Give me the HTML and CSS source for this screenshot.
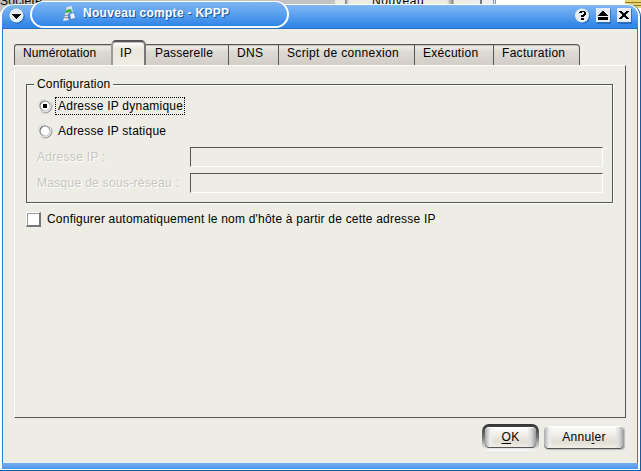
FILE: index.html
```html
<!DOCTYPE html>
<html lang="fr">
<head>
<meta charset="utf-8">
<title>Nouveau compte - KPPP</title>
<link rel="stylesheet" href="styles.css">
</head>
<body>
<div class="desktop">
  <div class="behind" aria-hidden="true"><span class="behind-left">Societe</span><span class="behind-button">Nouveau</span><span class="behind-edge"></span><span class="behind-icon"></span></div>
  <div class="window">
    <header class="titlebar">
      <svg class="menu" width="16" height="16" viewBox="0 0 16 16"><circle cx="8.5" cy="8.5" r="7.2" fill="#17589f" opacity=".6"/><circle cx="7.5" cy="7.5" r="7" fill="#e6edf5"/><path d="M3 6h9v1h-1v1h-1v1h-1v1h-1v1h-1v-1h-1v-1h-1v-1h-1v-1h-1z" fill="#000"/></svg>
      <svg class="tools" width="57" height="16" viewBox="0 0 57 16">
        <circle cx="8" cy="8.5" r="7" fill="#17589f" opacity=".6"/><circle cx="7" cy="7.5" r="7" fill="#e6edf5"/>
        <path d="M4 4h1v-1h5v1h1v3h-1v1h-1v1h-3v-2h2v-1h1v-2h-2v1h-3zM6 10h3v2h-3z" fill="#000"/>
        <path d="M22 1h14v15h-14zM43 1h14v15h-14z" fill="#17589f" opacity=".6"/>
        <path d="M21 0h14v14h-14zM42 0h14v14h-14z" fill="#e6edf5"/>
        <path d="M27 3h2v1h1v1h1v1h1v1h1v1h-10v-1h1v-1h1v-1h1v-1h1zM23 9h10v3h-10z" fill="#000"/>
        <path d="M44 3h3v1h1v1h2v-1h1v-1h3v1h-1v1h-1v1h-1v2h1v1h1v1h1v1h-3v-1h-1v-1h-2v1h-1v1h-3v-1h1v-1h1v-1h1v-2h-1v-1h-1v-1h-1z" fill="#000"/>
      </svg>
    </header>
    <div class="caption">
      <svg width="14" height="16" viewBox="0 0 14 16"><path d="M3 3l1-2 5-1v2l1 4-4 8-6 1 2-6z" fill="#dce2e6"/><path d="M3 4l5-1 1 3-7 1z" fill="#35b641"/><path d="M1 9h4v1H1zM1 11h4v1H0z" fill="#8d989f"/><path d="M5 8l3-2 4 1 1 6-3 2-5-2z" fill="#4b86d6"/><path d="M7 8l4-1 1 5-4 1z" fill="#e9f1fb"/></svg>
      <b>Nouveau compte - KPPP</b>
    </div>
    <main class="body">
      <nav class="tabs">
        <span class="tab first">Numérotation</span><span class="tab active">IP</span><span class="tab pass">Passerelle</span><span class="tab dns">DNS</span><span class="tab script">Script de connexion</span><span class="tab exec">Exécution</span><span class="tab fact">Facturation</span>
      </nav>
      <section class="page">
        <div class="group">
          <div class="legend"><i></i><span>Configuration</span><i></i></div>
          <div class="radio one"><svg width="16" height="16" viewBox="0 0 16 16"><use href="#ring"/><path d="M6 6h4v4H6z" fill="#000"/></svg><span class="focus">Adresse IP dynamique</span></div>
          <div class="radio two"><svg width="16" height="16" viewBox="0 0 16 16"><defs><linearGradient id="g" x2="1" y2="1"><stop stop-color="#bbb"/><stop offset=".4" stop-color="#fff"/><stop offset="1" stop-color="#555"/></linearGradient><linearGradient id="h" x2="1" y2="1"><stop stop-color="#555"/><stop offset=".7" stop-color="#bbb"/><stop offset="1" stop-color="#eee"/></linearGradient><g id="ring"><circle cx="8" cy="8" r="7" fill="#e6e5df" stroke="url(#g)"/><circle cx="8" cy="8" r="5" fill="#fff" stroke="url(#h)" stroke-width="1.2"/></g></defs><use href="#ring"/></svg><span>Adresse IP statique</span></div>
          <div class="field"><label class="addr">Adresse IP :</label><div class="input"></div></div>
          <div class="field"><label class="mask">Masque de sous-réseau :</label><div class="input"></div></div>
        </div>
        <div class="check"><span class="box"></span><span class="label">Configurer automatiquement le nom d'hôte à partir de cette adresse IP</span></div>
      </section>
      <footer class="buttons"><div class="default"><div class="button"><span><u>O</u>K</span></div></div><div class="button cancel"><span>Annu<u>l</u>er</span></div></footer>
    </main>
    <div class="bottom"></div>
  </div>
</div>
</body>
</html>
```
FILE: styles.css
```css
* { box-sizing: border-box; }
body { margin: 0; font: 12px/14px "Liberation Sans", Arial, sans-serif; letter-spacing: .3px; color: #000; white-space: nowrap; }
svg { display: block; flex: none; }
.desktop { width: 641px; height: 471px; position: relative; overflow: hidden; background: #fff; }
.behind { position: absolute; inset: 0 0 auto 0; height: 12px; background: #fff; }
.behind-left { position: absolute; left: 0; top: 0; width: 335px; height: 12px; background: #c3c3c3; line-height: 2px; }
.behind-button { position: absolute; left: 335px; top: 0; width: 133px; height: 4px; padding-left: 37px; line-height: 2px; letter-spacing: .6px; background: linear-gradient(90deg, #eeede5 10px, #888 10px 11px, #ddd 13px, #eeede5 16px 112px, #888 118px, #eeede5 119px); }
.behind-edge { position: absolute; left: 468px; top: 0; width: 29px; height: 4px; background: linear-gradient(90deg, #eee 12px, #777 12px 14px, #eee 14px 25px, #8796ad 25px 26px, #eee 26px 27px, #8796ad 27px 28px, #fff 28px); }
.behind-icon { position: absolute; right: 0; top: 0; width: 16px; height: 8px; background: repeating-linear-gradient(#e8d46c 0 2px, #8e7a29 2px 3px); }
.window { position: absolute; left: 0; top: 4px; width: 641px; height: 467px; display: flex; flex-direction: column; background: #fff; border-radius: 13px 13px 0 0; border-right: 1px solid #17589f; border-bottom: 1px solid #17589f; padding: 1px 2px 1px 2px; }
.titlebar { height: 24px; flex: none; display: flex; justify-content: space-between; padding: 3px 6px 0 7px; border-radius: 11px 11px 0 0; background: linear-gradient(#82b7f2, #5ba0ef 45%, #3186e6 90%); border-bottom: 1px solid #2870c3; }
.caption { position: absolute; left: 30px; top: -3px; width: 259px; height: 27px; display: flex; padding: 4px 0 0 31px; gap: 6px; border: 2px solid #fff; border-top-width: 1px; border-radius: 14px; background: linear-gradient(#7eb5f3, #5a9fee 50%, #2f86e8); color: #fff; line-height: 15px; letter-spacing: .3px; text-shadow: 1px 1px 0 #1c4f8f; }
.body { flex: 1; display: flex; flex-direction: column; padding: 11px 11px 0; background: #eeede5; border: solid #2c78c8; border-width: 0 1px; }
.tabs { display: flex; height: 25px; flex: none; align-items: flex-end; }
.tab { height: 21px; padding: 1px 0 0 8px; border-top: 1px solid #555; border-right: 1px solid #555; background: linear-gradient(#efeee7, #dddad3 35%, #d2cec7); box-shadow: inset 0 1px #c5c2bb; }
.first { width: 97px; border-left: 1px solid #555; border-radius: 3px 0 0; border-right: 0; letter-spacing: .1px; }
.active { width: 35px; height: 25px; padding: 4px 0 0 7px; border: 2px solid #555; border-bottom: 0; border-color: #555 #777 #555 #999; border-radius: 5px 5px 0 0; background: linear-gradient(#fff, #eae7dc 30%, #eeede5); }
.pass { width: 83px; padding-left: 9px; letter-spacing: .2px; }
.dns { width: 50px; }
.script { width: 136px; letter-spacing: .35px; }
.exec { width: 79px; }
.fact { width: 86px; border-radius: 0 4px 0 0; }
.page { height: 353px; flex: none; border: 1px solid #fff; border-right-color: #555; border-bottom-color: #555; padding: 11px 12px 0 11px; }
.group { display: flow-root; height: 119px; border: 1px solid #555; border-top: 0; box-shadow: 1px 1px #fff; margin-top: 7px; }
.legend { display: flex; margin-top: -7px; height: 14px; gap: 3px; align-items: center; letter-spacing: .15px; }
.legend i { height: 2px; background: linear-gradient(#555 50%, #fff 50%); flex: 1; position: relative; top: 1px; }
.legend i:first-child { flex: 0 0 7px; }
.radio { display: flex; align-items: center; padding-left: 10px; gap: 2px; letter-spacing: .23px; }
.one { height: 20px; margin-top: 5px; }
.two { height: 20px; margin-top: 5px; }
.focus { border: 1px dotted #000; height: 18px; padding: 1px 1px 0 2px; }
.two span { padding-left: 3px; }
.field { display: flex; justify-content: space-between; align-items: center; height: 20px; margin: 6px 9px 0 10px; color: #c6c5be; text-shadow: 1px 1px #fff; }
.input { width: 413px; height: 20px; border: 1px solid #555; border-right-color: #fff; border-bottom-color: #fff; }
.check { display: flex; align-items: center; margin-top: 8px; gap: 6px; height: 16px; letter-spacing: .205px; }
.box { width: 15px; height: 15px; background: #fff; border: 1px solid #fff; border-right: 2px solid #777; border-bottom: 2px solid #777; box-shadow: inset 1px 1px #999; }
.buttons { display: flex; justify-content: flex-end; align-items: center; gap: 5px; height: 32px; margin-top: 3px; padding-right: 2px; }
.default { padding: 3px; width: 57px; height: 27px; border-radius: 7px; background: linear-gradient(#333, #777 50%, #fff); }
.button { width: 51px; height: 21px; display: flex; justify-content: center; align-items: center; border-radius: 4px; background: linear-gradient(90deg, #aaa 0, #eee 5px, transparent 9px calc(100% - 9px), #ddd calc(100% - 5px), #999), linear-gradient(#fff, #e1ded4 70%, #f2f1eb); box-shadow: inset 0 -1px #555, inset 0 1px #fff; }
.cancel { width: 80px; height: 23px; box-shadow: inset 0 -1px #555, inset 0 1px #fff, 1px 1px 1px #bbb; }
.button u { text-underline-offset: 2px; }
.bottom { height: 6px; flex: none; background: linear-gradient(#72aff3, #4c97e9); }
```
